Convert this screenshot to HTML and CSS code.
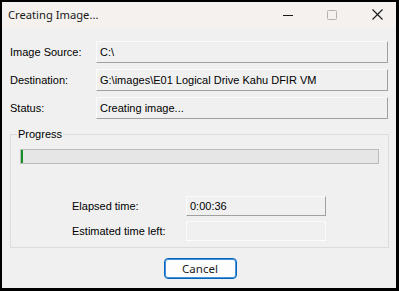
FILE: index.html
```html
<!DOCTYPE html>
<html>
<head>
<meta charset="utf-8">
<link rel="stylesheet" href="styles.css">
</head>
<body>
<div class="window">
  <div class="titlebar">
    <span class="title">Creating Image...</span>
    <div class="controls">
      <svg class="ctl ctl-min" width="10" height="10" viewBox="0 0 10 10"><path d="M0 5.5H10" stroke="#1a1a1a" stroke-width="1"/></svg>
      <svg class="ctl ctl-max" width="10" height="10" viewBox="0 0 10 10"><rect x="0.5" y="0.5" width="9" height="9" rx="1" fill="none" stroke="#b4b4b4" stroke-width="1"/></svg>
      <svg class="ctl ctl-close" width="11" height="11" viewBox="0 0 11 11"><path d="M0.5 0.5L10.5 10.5M10.5 0.5L0.5 10.5" stroke="#1a1a1a" stroke-width="1.1"/></svg>
    </div>
  </div>
  <div class="content">
    <div class="info">
      <span class="label">Image Source:</span><div class="field">C:\</div>
      <span class="label">Destination:</span><div class="field">G:\images\E01 Logical Drive Kahu DFIR VM</div>
      <span class="label">Status:</span><div class="field">Creating image...</div>
    </div>
    <div class="group">
      <span class="legend">Progress</span>
      <div class="progress"><div class="progress-fill" style="width:2px"></div></div>
      <div class="times">
        <span class="label">Elapsed time:</span><div class="field tfield">0:00:36</div>
        <span class="label">Estimated time left:</span><div class="field tfield flat"></div>
      </div>
    </div>
    <div class="actions"><button class="btn">Cancel</button></div>
  </div>
</div>
</body>
</html>
```
FILE: styles.css
```css
* { box-sizing: border-box; }
html, body { margin: 0; padding: 0; background: #000; }
.window {
  width: 399px;
  height: 291px;
  border-style: solid;
  border-color: #000;
  border-width: 2px 3px 3px 2px;
  background: #f0f0f0;
  display: flex;
  flex-direction: column;
  overflow: hidden;
}
.titlebar {
  height: 26px;
  background: #f4f1ee;
  display: flex;
  align-items: center;
  padding-left: 6px;
  flex: none;
}
.title {
  font-family: "Noto Sans", sans-serif;
  font-size: 11.2px;
  color: #1a1a1a;
  margin-top: -2px;
}
.controls {
  margin-left: auto;
  display: flex;
  align-items: center;
  margin-top: -1px;
}
.ctl { display: block; }
.ctl-min { margin-right: 34px; margin-top: 1px; }
.ctl-max { margin-right: 35px; }
.ctl-close { margin-right: 13px; }
.content {
  flex: 1;
  padding: 13px 7px 0 8px;
  font-family: "Liberation Sans", Arial, sans-serif;
  font-size: 11px;
  color: #000;
}
.info {
  display: grid;
  grid-template-columns: 86px 1fr;
  row-gap: 6px;
  align-items: center;
  margin-right: 1px;
}
.label { line-height: 13px; white-space: nowrap; }
.field {
  height: 22px;
  display: flex;
  align-items: center;
  padding-left: 3px;
  background: #f0f0f0;
  border-style: solid;
  border-width: 1px;
  border-color: #fbfbfb #a0a0a0 #a0a0a0 #fbfbfb;
  white-space: nowrap;
  overflow: hidden;
}
.group {
  position: relative;
  margin-top: 15px;
  border: 1px solid #dcdcdc;
  padding: 14px 9px 6px 9px;
}
.legend {
  position: absolute;
  top: -7px;
  left: 6px;
  padding: 0 1px;
  background: #f0f0f0;
  line-height: 13px;
}
.progress {
  height: 15px;
  background: #e6e6e6;
  border: 1px solid #bcbcbc;
}
.progress-fill {
  height: 100%;
  background: #17902a;
}
.times {
  display: grid;
  grid-template-columns: 114px 140px;
  row-gap: 5px;
  align-items: center;
  margin-top: 32px;
  padding-left: 52px;
}
.tfield { height: 20px; }
.flat { border-color: #fbfbfb; }
.actions {
  display: flex;
  justify-content: center;
  margin-top: 10px;
}
.btn {
  width: 73px;
  height: 21px;
  background: #fdfdfd;
  border: 1px solid #0067c0;
  box-shadow: inset 0 0 0 1px #4a90d4;
  border-radius: 4px;
  font-family: "Noto Sans", sans-serif;
  font-size: 11.5px;
  color: #1a1a1a;
  padding: 0 0 1px 0;
  margin-left: 1px;
}
```
